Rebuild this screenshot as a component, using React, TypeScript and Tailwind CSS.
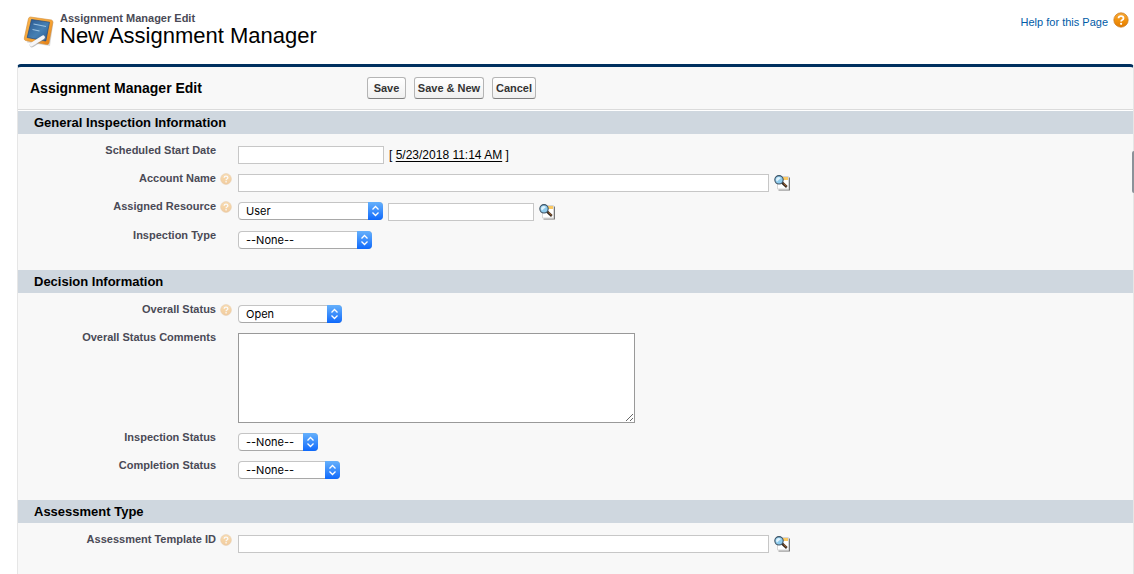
import React from "react";

const helpTexts = {
  account: "Help: Account Name",
  resource: "Help: Assigned Resource",
  status: "Help: Overall Status",
  template: "Help: Assessment Template ID",
};

const BoardIcon = () => (
  <svg className="w-8 h-8 shrink-0" viewBox="0 0 32 32" aria-hidden="true">
    <defs>
      <linearGradient id="frame" x1="0" y1="0" x2="1" y2="1">
        <stop offset="0" stopColor="#fbb64e" />
        <stop offset="0.6" stopColor="#f5a030" />
        <stop offset="1" stopColor="#e27a12" />
      </linearGradient>
      <linearGradient id="board" x1="0" y1="0" x2="1" y2="1">
        <stop offset="0" stopColor="#28568f" />
        <stop offset="0.55" stopColor="#4680b3" />
        <stop offset="1" stopColor="#2a5990" />
      </linearGradient>
    </defs>
    <path d="M7 4 30.500 6 27 30 4 26.500Z" fill="#888" opacity="0.3" />
    <path d="M7.500 1 28.500 4Q30.200 4.500 29.800 6.500L26 27Q25.500 29 23.500 28.500L2.500 24.500Q1 24 1.300 22L5.500 2.500Q6 1 7.500 1Z" fill="url(#frame)" stroke="#d08a34" strokeWidth="0.6" />
    <path d="M8.500 3.500 26.500 6.200 22.800 25 4.200 21.500Z" fill="url(#board)" stroke="#23497c" strokeWidth="0.7" />
    <path d="M10.500 8 23 10.500M9.500 13.500 16.500 15" stroke="#9cc3e2" strokeWidth="1.100" fill="none" />
    <path d="M9 29 20.500 21.800" stroke="#888" strokeWidth="4.600" strokeLinecap="round" opacity="0.5" />
    <path d="M8.500 28.500 20 21.300" stroke="#f6f6f8" strokeWidth="3.800" strokeLinecap="round" />
  </svg>
);

const HelpIcon = ({ className }: { className: string }) => (
  <svg className={className} viewBox="0 0 16 16" aria-hidden="true">
    <defs>
      <linearGradient id="orange" x1="0" y1="0" x2="0" y2="1">
        <stop offset="0" stopColor="#f5a93b" />
        <stop offset="0.5" stopColor="#f3930f" />
        <stop offset="1" stopColor="#e07a00" />
      </linearGradient>
    </defs>
    <circle cx="8" cy="8" r="7.200" fill="url(#orange)" stroke="#c9781c" strokeWidth="0.700" />
    <path d="M5.500 6.300Q5.600 4.200 8 4.200Q10.500 4.200 10.500 6.200Q10.500 7.300 9.200 8Q8.100 8.600 8.100 9.600" fill="none" stroke="#fff" strokeWidth="1.800" />
    <circle cx="8.100" cy="11.800" r="1.100" fill="#fff" />
  </svg>
);

const LookupIcon = () => (
  <svg className="w-4 h-4" viewBox="0 0 16 16" aria-hidden="true">
    <path d="M4.500 15H15.500V2.500" fill="none" stroke="#777" strokeWidth="1.200" />
    <path d="M3.500 1.500H14.500V14H3.500Z" fill="#fff" stroke="#d6d6d6" />
    <path d="M8 2H14V5H8Z" fill="#fbc963" />
    <path d="M8 7.500 12.800 12" stroke="#332a22" strokeWidth="2.400" />
    <path d="M9.500 8.300 12.600 11.200" stroke="#d27a35" strokeWidth="0.900" />
    <circle cx="5" cy="4.800" r="4.200" fill="#8ecbed" stroke="#3d5263" strokeWidth="1.100" />
    <path d="M2 5Q2.300 2.200 5 2L7 3 3 6.500Z" fill="#dff3fd" />
  </svg>
);

type SelectProps = {
  id: string;
  width: string;
  options: string[];
};

const SelectBox = ({ id, width, options }: SelectProps) => (
  <div className={`relative h-[18px] ${width}`}>
    <select
      id={id}
      className="block w-full h-[18px] appearance-none rounded-[4px] border border-[#c4c4c4] border-b-[#a8a8a8] bg-white pl-[7px] pr-4 font-['Inter',sans-serif] text-[11px] leading-[16px] text-black"
    >
      {options.map((opt) => (
        <option key={opt}>{opt}</option>
      ))}
    </select>
    <span className="pointer-events-none absolute right-0 top-0 flex h-[18px] w-[15px] items-center justify-center rounded-r-[4px] bg-linear-to-b from-[#65b0fb] to-[#0c68fb]">
      <svg className="w-[9px] h-3" viewBox="0 0 9 12" fill="none" stroke="#fff" strokeWidth="1.300" aria-hidden="true">
        <path d="M1.500 4.500 4.500 1.500 7.500 4.500M1.500 7.500 4.500 10.500 7.500 7.500" />
      </svg>
    </span>
  </div>
);

const TextBox = ({ id, width, label }: { id: string; width: string; label?: string }) => (
  <input
    id={id}
    type="text"
    aria-label={label}
    className={`block h-[18px] border border-[#c7c7c7] bg-white px-1 text-xs ${width}`}
  />
);

const LookupButton = ({ label }: { label: string }) => (
  <button type="button" aria-label={label} className="ml-[5px] h-[18px] cursor-pointer">
    <LookupIcon />
  </button>
);

type FieldProps = {
  id: string;
  label: string;
  help?: string;
  children: React.ReactNode;
};

const Field = ({ id, label, help, children }: FieldProps) => (
  <div className="flex items-start">
    <div className="flex w-[220px] shrink-0 justify-end">
      <label htmlFor={id} className="text-[11px] leading-4 font-bold text-[#4a4a56]">
        {label}
      </label>
      <div className="ml-1 w-[18px] pt-[3px]" title={help}>
        {help && <HelpIcon className="w-3 h-3 opacity-35" />}
      </div>
    </div>
    <div className="flex min-w-0 flex-1 items-end pt-1 pb-[6px]">{children}</div>
  </div>
);

const Section = ({ title, children }: { title: string; children: React.ReactNode }) => (
  <section>
    <h3 className="bg-[#cfd7df] pl-4 text-[13px] leading-[23px] font-bold text-black">{title}</h3>
    <div className="pt-2 pb-[15px]">{children}</div>
  </section>
);

const formButton =
  "h-[22px] cursor-pointer rounded-[3px] border border-[#b5b5b5] border-b-[#7f7f7f] bg-linear-to-b from-white to-[#f0f0f0] text-[11px] leading-[18px] font-bold text-[#333]";

const App: React.FC = () => {
  return (
    <div className="relative min-h-screen bg-white pl-[17px] font-['Liberation_Sans',Arial,sans-serif]">
      {/* Page title */}
      <header className="flex h-16 items-start justify-between pr-[5px] pl-[6px]">
        <div className="flex pt-3">
          <div className="pt-1">
            <BoardIcon />
          </div>
          <div className="ml-[5px]">
            <h1 className="text-[11px] leading-[12px] font-bold text-[#4a4a56]">Assignment Manager Edit</h1>
            <h2 className="text-[22px] leading-6 text-black">New Assignment Manager</h2>
          </div>
        </div>
        <a href="#help" className="flex items-start gap-[5px] pt-3 text-[11px] leading-5 text-[#015ba7]">
          <span>Help for this Page</span>
          <HelpIcon className="w-4 h-4" />
        </a>
      </header>

      <form className="rounded-t-[4px] border-x border-t-[3px] border-x-[#e6e6e6] border-t-[#00305f] bg-[#f8f8f8]">
        {/* Form header */}
        <div className="mb-px flex h-[43px] items-center border-b border-[#dbdbdb] pl-3 shadow-[0_1px_0_#fff]">
          <h2 className="w-[337px] text-[14px] font-bold text-black">Assignment Manager Edit</h2>
          <div className="flex gap-2">
            <button type="button" className={`w-[39px] ${formButton}`}>Save</button>
            <button type="button" className={`w-[70px] ${formButton}`}>Save &amp; New</button>
            <button type="button" className={`w-[44px] ${formButton}`}>Cancel</button>
          </div>
        </div>

        <Section title="General Inspection Information">
          <Field id="startDate" label="Scheduled Start Date">
            <TextBox id="startDate" width="w-[146px]" />
            <span className="ml-[5px] text-[12px] leading-[18px] text-black">
              [ <a href="#now" className="underline underline-offset-2">5/23/2018 11:14 AM</a> ]
            </span>
          </Field>
          <Field id="account" label="Account Name" help={helpTexts.account}>
            <TextBox id="account" width="w-[531px]" />
            <LookupButton label="Account Name Lookup" />
          </Field>
          <Field id="resource" label="Assigned Resource" help={helpTexts.resource}>
            <div className="self-start">
              <SelectBox id="resource" width="w-[145px]" options={["User", "Contact"]} />
            </div>
            <div className="ml-[5px] flex items-end pt-[1px]">
              <TextBox id="resourceName" width="w-[146px]" label="Assigned Resource Name" />
              <LookupButton label="Assigned Resource Lookup" />
            </div>
          </Field>
          <Field id="inspectionType" label="Inspection Type">
            <SelectBox id="inspectionType" width="w-[134px]" options={["--None--"]} />
          </Field>
        </Section>

        <Section title="Decision Information">
          <Field id="overallStatus" label="Overall Status" help={helpTexts.status}>
            <SelectBox id="overallStatus" width="w-[104px]" options={["Open", "Closed"]} />
          </Field>
          <Field id="comments" label="Overall Status Comments">
            <textarea
              id="comments"
              className="block h-[90px] w-[397px] resize border border-[#999] bg-white p-1 text-xs"
            />
          </Field>
          <Field id="inspectionStatus" label="Inspection Status">
            <SelectBox id="inspectionStatus" width="w-20" options={["--None--"]} />
          </Field>
          <Field id="completionStatus" label="Completion Status">
            <SelectBox id="completionStatus" width="w-[102px]" options={["--None--"]} />
          </Field>
        </Section>

        <Section title="Assessment Type">
          <Field id="template" label="Assessment Template ID" help={helpTexts.template}>
            <TextBox id="template" width="w-[531px]" />
            <LookupButton label="Assessment Template Lookup" />
          </Field>
        </Section>
      </form>

      {/* Side panel handle */}
      <div className="absolute top-[151px] right-0 h-[42px] w-[2px] rounded-l-[2px] bg-[#8b9299]" />
    </div>
  );
};

export default App;
